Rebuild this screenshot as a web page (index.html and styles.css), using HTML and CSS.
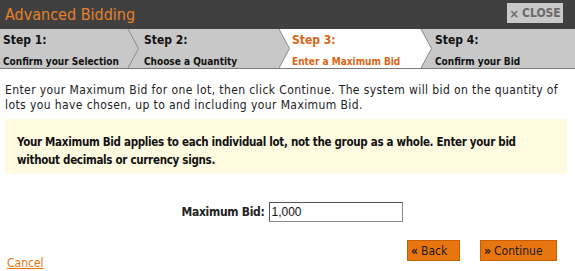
FILE: index.html
```html
<!DOCTYPE html>
<html>
<head>
<meta charset="utf-8">
<link rel="stylesheet" href="styles.css">
</head>
<body>
<div class="dialog">
  <div class="titlebar">
    <div class="title">Advanced Bidding</div>
    <button class="close"><span class="x">&times;</span> CLOSE</button>
  </div>
  <div class="steps">
    <div class="step s1">
      <div class="num">Step 1:</div>
      <div class="lbl">Confirm your Selection</div>
    </div>
    <svg class="sep" width="12" height="39" viewBox="0 0 12 39">
      <polygon points="0,0 1,0 11.5,19.5 1,39 0,39" fill="#c8c8c8"/>
      <polygon points="1,0 12,0 12,39 1,39 11.5,19.5" fill="#c8c8c8"/>
      <polyline points="1,0 11.5,19.5 1,39" fill="none" stroke="#8a8a8a" stroke-width="1"/>
    </svg>
    <div class="step s2">
      <div class="num">Step 2:</div>
      <div class="lbl">Choose a Quantity</div>
    </div>
    <svg class="sep" width="12" height="39" viewBox="0 0 12 39">
      <polygon points="0,0 1,0 11.5,19.5 1,39 0,39" fill="#c8c8c8"/>
      <polygon points="1,0 12,0 12,39 1,39 11.5,19.5" fill="#ffffff"/>
      <polyline points="1,0 11.5,19.5 1,39" fill="none" stroke="#8a8a8a" stroke-width="1"/>
    </svg>
    <div class="step s3 active">
      <div class="num">Step 3:</div>
      <div class="lbl">Enter a Maximum Bid</div>
    </div>
    <svg class="sep" width="12" height="39" viewBox="0 0 12 39">
      <polygon points="0,0 1,0 11.5,19.5 1,39 0,39" fill="#ffffff"/>
      <polygon points="1,0 12,0 12,39 1,39 11.5,19.5" fill="#c8c8c8"/>
      <polyline points="1,0 11.5,19.5 1,39" fill="none" stroke="#8a8a8a" stroke-width="1"/>
    </svg>
    <div class="step s4">
      <div class="num">Step 4:</div>
      <div class="lbl">Confirm your Bid</div>
    </div>
  </div>
  <div class="content">
    <p class="intro">Enter your Maximum Bid for one lot, then click Continue. The system will bid on the quantity of lots you have chosen, up to and including your Maximum Bid.</p>
    <div class="notice">Your Maximum Bid applies to each individual lot, not the group as a whole. Enter your bid without decimals or currency signs.</div>
    <div class="field">
      <label class="flabel" for="maxbid">Maximum Bid:</label>
      <input id="maxbid" class="finput" type="text" value="1,000">
    </div>
    <div class="footer">
      <a class="cancel" href="#">Cancel</a>
      <div class="buttons">
        <button class="btn back"><span class="chev">&laquo;</span> Back</button>
        <button class="btn cont"><span class="chev">&raquo;</span> Continue</button>
      </div>
    </div>
  </div>
</div>
</body>
</html>
```
FILE: styles.css
```css
html, body {
  margin: 0;
  padding: 0;
  background: #ffffff;
}
body {
  font-family: "DejaVu Sans Condensed", "DejaVu Sans", sans-serif;
  color: #222222;
  width: 575px;
  height: 271px;
  overflow: hidden;
}
.dialog {
  width: 575px;
}
.titlebar {
  height: 29px;
  background: #404040;
  display: flex;
  align-items: flex-start;
  justify-content: space-between;
}
.title {
  color: #e8802a;
  font-size: 16px;
  line-height: 16px;
  padding: 7px 0 0 5px;
}
.close {
  margin: 3px 12px 0 0;
  height: 20px;
  width: 56px;
  padding: 0;
  border: none;
  background: #c9c9c9;
  color: #6a6a6a;
  font-family: inherit;
  font-weight: bold;
  font-size: 12px;
  display: flex;
  align-items: center;
  justify-content: center;
  gap: 3px;
}
.close .x {
  font-size: 13px;
}
.steps {
  display: flex;
  height: 39px;
  background: #c8c8c8;
  border-bottom: 1px solid #7a7a7a;
}
.sep {
  flex: none;
  display: block;
}
.step {
  display: flex;
  flex-direction: column;
  font-weight: bold;
  color: #111111;
  padding-top: 4px;
  box-sizing: border-box;
}
.s1 { width: 127px; padding-left: 3px; }
.s2 { width: 139px; padding-left: 5px; }
.s3 { width: 130px; padding-left: 2px; background: #ffffff; }
.s4 { flex: 1; padding-left: 3px; }
.step .num {
  font-size: 12px;
  line-height: 15px;
}
.step .lbl {
  font-size: 10px;
  line-height: 12px;
  margin-top: 8px;
}
.step.active {
  color: #dc6414;
}
.content {
  padding: 0 8px 0 5px;
}
.intro {
  margin: 14px 0 0 0;
  font-size: 12px;
  line-height: 15px;
  letter-spacing: 0.4px;
  color: #222222;
}
.notice {
  margin: 6px 0 0 0;
  background: #fffbe1;
  padding: 14px 10px 5px 12px;
  font-weight: bold;
  font-size: 11.5px;
  letter-spacing: -0.3px;
  line-height: 18px;
  color: #111111;
}
.field {
  display: flex;
  justify-content: center;
  align-items: center;
  gap: 4px;
  margin-top: 28px;
  padding-left: 12px;
}
.flabel {
  font-weight: bold;
  font-size: 12px;
  letter-spacing: -0.3px;
}
.finput {
  width: 134px;
  height: 20px;
  box-sizing: border-box;
  margin: 0;
  border: 1px solid #8a8a8a;
  border-top-color: #555555;
  border-left-color: #555555;
  padding: 0 2px;
  font-family: "Liberation Sans", sans-serif;
  font-size: 12px;
  color: #111111;
}
.footer {
  display: flex;
  justify-content: space-between;
  align-items: flex-end;
  margin-top: 18px;
}
.cancel {
  color: #e8760e;
  font-size: 12px;
  margin: 0 0 -9px 2px;
}
.buttons {
  display: flex;
  gap: 20px;
  margin-right: 10px;
}
.btn {
  height: 21px;
  background: #e8760e;
  border: 1px solid #c86000;
  color: #1a1a1a;
  font-family: inherit;
  font-size: 12px;
  padding: 0 0 0 3px;
  display: flex;
  align-items: center;
  gap: 3px;
  box-sizing: border-box;
}
.back { width: 53px; }
.cont { width: 77px; }
.btn .chev {
  font-weight: bold;
  font-size: 12px;
}
```
